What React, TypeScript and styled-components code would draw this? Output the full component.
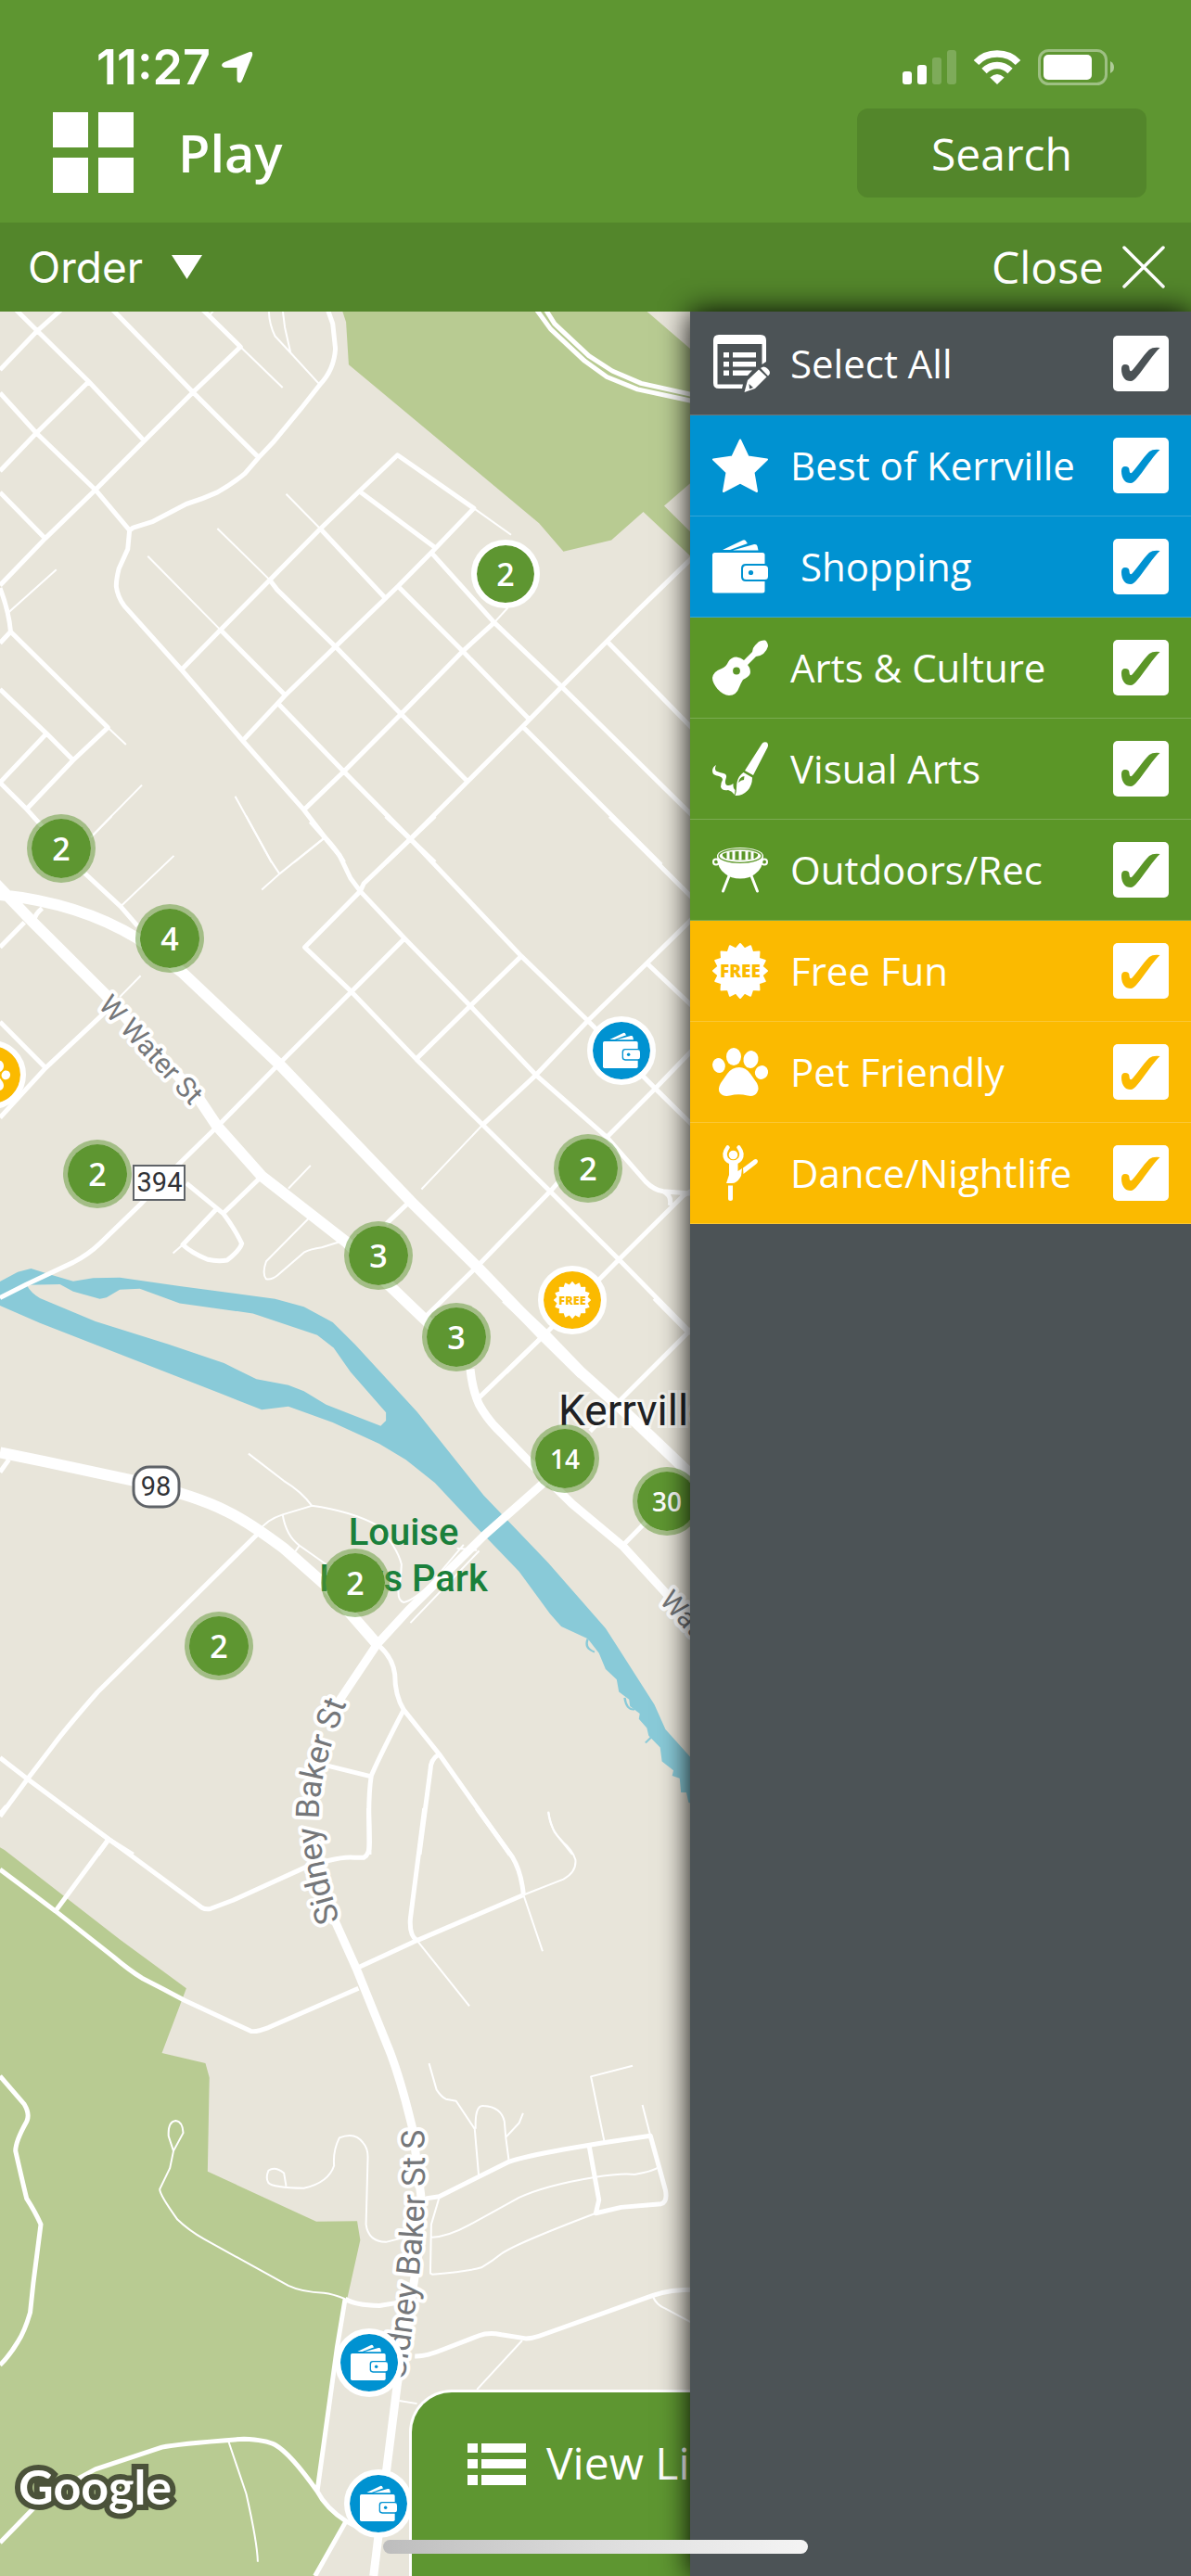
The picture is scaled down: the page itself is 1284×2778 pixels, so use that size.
import React, { useState } from 'react';
import styled, { createGlobalStyle } from 'styled-components';

const colors = {
  header: '#5e9631',
  bar: '#53862b',
  panel: '#4c5356',
  blue: '#0092d1',
  green: '#5b9627',
  yellow: '#fbba00',
  land: '#e8e5da',
  park: '#b8cb92',
  water: '#89cad8',
};

const GlobalStyle = createGlobalStyle`
  *, *::before, *::after { box-sizing: border-box; }
  body {
    margin: 0;
    background: ${colors.land};
    color: #fff;
    font-family: "Open Sans", "Noto Sans", sans-serif;
  }
  button, select, input { font: inherit; color: inherit; margin: 0; }
`;

const Screen = styled.div`
  display: flex;
  flex-direction: column;
  min-height: 100vh;
  position: relative;
  overflow: hidden;
`;

/* ---------- header ---------- */

const Header = styled.header`
  background: ${colors.header};
  height: 240px;
  padding-top: 40px;
`;

const StatusBar = styled.div`
  display: flex;
  justify-content: space-between;
  align-items: center;
  height: 66px;
  padding: 0 82px 0 104px;
`;

const Clock = styled.div`
  display: flex;
  align-items: center;
  gap: 12px;
  font-family: Inter, sans-serif;
  font-size: 52px;
  font-weight: 600;
  line-height: 60px;
`;

const StatusIcons = styled.div`
  display: flex;
  align-items: center;
  gap: 18px;
`;

const TitleRow = styled.div`
  display: flex;
  align-items: center;
  height: 118px;
  padding: 0 48px 0 56px;
`;

const IconButton = styled.button`
  display: flex;
  padding: 0 0 2px;
  border: 0;
  background: none;
`;

const Title = styled.h1`
  flex: 1;
  margin: 0 0 0 48px;
  padding-bottom: 2px;
  font-size: 56px;
  font-weight: 600;
  line-height: 72px;
`;

const SearchButton = styled.button`
  width: 312px;
  height: 96px;
  padding: 0;
  border: 0;
  border-radius: 12px;
  background: ${colors.bar};
  font-size: 48px;
`;

const Toolbar = styled.div`
  display: flex;
  align-items: center;
  justify-content: space-between;
  height: 96px;
  padding: 0 28px 0 30px;
  background: ${colors.bar};
  font-size: 48px;
`;

const OrderField = styled.label`
  display: flex;
  align-items: center;
  gap: 30px;
`;

const OrderSelect = styled.select`
  appearance: none;
  border: 0;
  padding: 0;
  background: none;
  font-family: Inter, sans-serif;
  font-size: 46px;
  line-height: 60px;
`;

const CloseButton = styled.button`
  display: flex;
  align-items: center;
  gap: 20px;
  padding: 0;
  border: 0;
  background: none;
  line-height: 60px;
`;

/* ---------- map ---------- */

const Main = styled.main`
  position: relative;
  flex: 1;
`;

const MapArea = styled.div`
  position: absolute;
  inset: 0;
  overflow: hidden;
  background: ${colors.land};
`;

const MapDrawing = styled.svg`
  display: block;
  width: 1284px;
  height: 2442px;

  .road, .lane, .avenue, .trunk {
    fill: none;
    stroke: #fff;
    stroke-linejoin: round;
    vector-effect: non-scaling-stroke;
  }
  .lane { stroke-width: 2px; }
  .road { stroke-width: 5px; }
  .avenue { stroke-width: 9px; }
  .trunk { stroke-width: 12px; }

  text { font-family: Roboto, Inter, sans-serif; }
  .street {
    fill: #75777a;
    stroke: #fff;
    stroke-width: 8px;
    stroke-linejoin: round;
    paint-order: stroke;
  }
`;

const Pin = styled.button<{ $x: number; $y: number; $fill: string; $solid?: boolean; $small?: boolean }>`
  position: absolute;
  left: ${(p) => p.$x - 37}px;
  top: ${(p) => p.$y - 37}px;
  display: flex;
  align-items: center;
  justify-content: center;
  width: 74px;
  height: 74px;
  padding: 0;
  border: ${(p) => (p.$solid ? 6 : 5)}px solid ${(p) => (p.$solid ? '#fff' : 'rgba(94, 150, 49, 0.5)')};
  border-radius: 50%;
  background: ${(p) => p.$fill};
  background-clip: padding-box;
  font-size: ${(p) => (p.$small ? 28 : 34)}px;
  font-weight: 600;
  line-height: 40px;
`;

const ListButton = styled.button`
  position: absolute;
  bottom: 0;
  left: 50%;
  transform: translateX(-50%);
  display: flex;
  align-items: flex-start;
  gap: 22px;
  width: 402px;
  height: 201px;
  padding: 44px 0 0 60px;
  border: 3px solid #fff;
  border-bottom: 0;
  border-radius: 46px 46px 0 0;
  background: ${colors.header};
  font-size: 48px;
  line-height: 64px;
  white-space: nowrap;

  svg { margin-top: 10px; }
`;

/* ---------- filter drawer ---------- */

const Drawer = styled.form`
  position: absolute;
  top: 0;
  right: 0;
  bottom: 0;
  width: 540px;
  background: ${colors.panel};
  box-shadow: 0 0 30px #000;
`;

const FilterRow = styled.label<{ $color: string; $tall?: boolean }>`
  display: flex;
  align-items: center;
  height: ${(p) => (p.$tall ? 112 : 109)}px;
  padding: 0 24px;
  border-bottom: 1px solid rgba(255, 255, 255, 0.2);
  background: ${(p) => p.$color};
  font-size: 42px;
  line-height: 58px;
`;

const FilterName = styled.span`
  flex: 1;
  margin-left: 24px;
  white-space: pre;
`;

const CheckWrap = styled.span`
  position: relative;
  display: block;
  width: 60px;
  height: 60px;

  svg {
    position: absolute;
    inset: 0;
    pointer-events: none;
  }
`;

const CheckInput = styled.input`
  appearance: none;
  display: block;
  width: 60px;
  height: 60px;
  border-radius: 5px;
  background: #fff;

  &:not(:checked) + svg { display: none; }
`;

const HomeIndicator = styled.div`
  position: absolute;
  left: 50%;
  bottom: 24px;
  width: 458px;
  height: 15px;
  transform: translateX(-50%);
  border-radius: 8px;
  background: linear-gradient(90deg, #bdbdbd, #dcdcdc 50%, #f4f4f4);
`;

/* ---------- icons ---------- */

type IconName = 'list' | 'star' | 'wallet' | 'guitar' | 'brush' | 'grill' | 'free' | 'paw' | 'dancer';

const burst = Array.from({ length: 32 }, (_, i) => {
  const r = i % 2 ? 24 : 29;
  const a = (i * Math.PI) / 16;
  return `${(30 + r * Math.sin(a)).toFixed(1)},${(30 - r * Math.cos(a)).toFixed(1)}`;
}).join(' ');

function drawIcon(name: IconName, cut: string) {
  switch (name) {
    case 'list':
      return (
        <g transform="translate(0 -1)">
          <path d="M32 58H7Q1 58 1 52V6Q1 0 7 0H52Q58 0 58 6V29L53.500 32V10H5.500V53.500H33z" />
          <path d="M12 19h6v5.500h-6zM22 19h25v5.500H22zM12 29h6v5.500h-6zM22 29h25v5.500H22zM12 38.500h6V44h-6zM22 38.500h21L38 44H22z" />
          <path d="M34.500 62L38 49L50 37.500L58.500 45.500L46 58z" />
          <path d="M52 36Q56 32.500 60 37Q64 41 60 44.500z" />
          <path d="M39.500 53l4.500 4-4 1.500z" fill={cut} />
        </g>
      );
    case 'star':
      return (
        <path
          d="M30 2.500L38.500 20.500L59 23.500L44.500 37.500L48 58L30 48.500L12 58L15.500 37.500L1 23.500L21.500 20.500z"
          stroke="#fff"
          strokeWidth="2"
          strokeLinejoin="round"
        />
      );
    case 'wallet':
      return (
        <g transform="translate(0 1)">
          <path d="M11 11L33 .5Q36 -.5 37 3L38 4L19 11z" />
          <path d="M22 11.500L45 5Q48 4.500 48.500 7L49.500 11.500z" />
          <rect x="0" y="14" width="56.500" height="43.500" rx="2.500" />
          <path d="M60 26H36Q31 26 31 31V40Q31 45 36 45H60z" fill={cut} />
          <rect x="33" y="28" width="27" height="15" rx="3.500" />
          <circle cx="41.500" cy="35.500" r="2.600" fill={cut} />
        </g>
      );
    case 'guitar':
      return (
        <>
          <path d="M50 2Q53 0 57 .5Q60 3 60 7Q59 11 55 15Q51 18 47 18L38 27Q42 32 40.500 37Q39 40 33 43Q30.500 47 29 51Q26 60 18 60Q12 60 5.500 53Q0 46 0 41Q1 34 10 31Q15 29 17 24Q20 18.500 26 18.500Q31 19 34 22L43 13Q43 9 46 6z" />
          <circle cx="26" cy="33.500" r="3.900" fill={cut} />
        </>
      );
    case 'brush':
      return (
        <g transform="translate(0 1)">
          <path d="M53.500 2Q55 -.5 58.500 .5Q61 2.500 59.500 6L44 36L35 31z" />
          <path d="M33.500 33L43 38.500Q43 47 38 52.500Q32 58.500 24.500 58Q26 54 26 50Q26 42 29 37.500Q31 34.500 33.500 33z" />
          <path d="M28 44Q29 38 34.500 37L34 41Q31 41 28 44z" fill={cut} />
          <path d="M4 25Q2 29 4 31.500Q8 33 12 34Q16.500 35 14.500 40Q13 44 15 46.500Q19 48 22.500 45Q22 50 24.500 52L24 57Q21 53 17 52Q10 53 9 48.500Q9 44 11 41Q11 38 7 37Q0 36 0 31.500Q0 27 4 25z" />
        </g>
      );
    case 'grill':
      return (
        <g transform="translate(0 5.500)">
          <path d="M18 31L11.500 47.500M42 31L48.500 47.500" stroke="#fff" strokeWidth="3" strokeLinecap="round" />
          <circle cx="4" cy="16" r="3" fill="none" stroke="#fff" strokeWidth="2" />
          <circle cx="56" cy="16" r="3" fill="none" stroke="#fff" strokeWidth="2" />
          <path d="M5 9Q5 23 14 29Q20 34 30 34Q40 34 46 29Q55 23 55 9z" />
          <ellipse cx="30" cy="9.500" rx="25" ry="9" />
          <ellipse cx="30" cy="9.500" rx="23" ry="7.300" fill="none" stroke={cut} strokeWidth="1.300" />
          <path d="M11 7.500Q16 4.500 30 4.500Q44 4.500 49 7.500Q50 11 44 12.500Q38 14 30 14Q22 14 16 12.500Q10 11 11 7.500z" fill={cut} />
          <path d="M17 5v8M23 4v10M30 4v10M37 4v10M43 5v8" stroke="#fff" strokeWidth="3" />
        </g>
      );
    case 'free':
      return (
        <>
          <polygon points={burst} stroke="#fff" strokeWidth="2" strokeLinejoin="round" />
          <text
            x="30"
            y="37"
            fill={cut}
            fontFamily="Open Sans, sans-serif"
            fontSize="19"
            fontWeight="800"
            textAnchor="middle"
          >
            FREE
          </text>
        </>
      );
    case 'paw':
      return (
        <g transform="translate(0 4)">
          <ellipse cx="7" cy="19" rx="6.800" ry="8" transform="rotate(-15 7 19)" />
          <ellipse cx="23" cy="9.500" rx="8" ry="9.500" />
          <ellipse cx="41.500" cy="12.500" rx="8" ry="9.500" transform="rotate(10 41.500 12.500)" />
          <ellipse cx="53" cy="26.500" rx="7" ry="7.500" transform="rotate(30 53 26.500)" />
          <path d="M29 21Q36 21 41 28L48 38Q51 44 48 48.500Q45 53 38 51.500Q28 49 19 51.500Q12 53 8.500 49Q5 45 9 38L16 28Q21 21 29 21z" />
        </g>
      );
    case 'dancer':
      return (
        <>
          <circle cx="22.500" cy="10.500" r="4.800" />
          <path d="M16.500 2.500Q11.500 9 15 15Q18 18.500 22.500 18.500Q27 18.500 30 15Q33.500 9 28.500 2.500" fill="none" stroke="#fff" strokeWidth="4.500" strokeLinecap="round" />
          <path d="M18 18H27.500V28L32 25L31 33Q27 41 21 41H15L18 32z" />
          <path d="M33 24.500L45 15.500Q48 14 49 17Q49 19 47 20.500L33.500 31z" />
          <path d="M19.500 43.500V57.500" stroke="#fff" strokeWidth="5" />
          <circle cx="19.500" cy="57.500" r="2.500" />
        </>
      );
  }
}

function Icon({ name, cut, size = 60 }: { name: IconName; cut: string; size?: number }) {
  return (
    <svg width={size} height={size} viewBox="0 0 60 60" fill="#fff" overflow="visible" aria-hidden="true">
      {drawIcon(name, cut)}
    </svg>
  );
}

/* ---------- data ---------- */

const filters: { name: string; icon: IconName; color: string }[] = [
  { name: 'Select All', icon: 'list', color: colors.panel },
  { name: 'Best of Kerrville', icon: 'star', color: colors.blue },
  { name: '\u00a0Shopping', icon: 'wallet', color: colors.blue },
  { name: 'Arts & Culture', icon: 'guitar', color: colors.green },
  { name: 'Visual Arts', icon: 'brush', color: colors.green },
  { name: 'Outdoors/Rec', icon: 'grill', color: colors.green },
  { name: 'Free Fun', icon: 'free', color: colors.yellow },
  { name: 'Pet Friendly', icon: 'paw', color: colors.yellow },
  { name: 'Dance/Nightlife', icon: 'dancer', color: colors.yellow },
];

const clusters = [
  { x: 545, y: 283, count: 2, solid: true },
  { x: 66, y: 579, count: 2 },
  { x: 183, y: 676, count: 4 },
  { x: 105, y: 930, count: 2 },
  { x: 634, y: 924, count: 2 },
  { x: 408, y: 1018, count: 3 },
  { x: 492, y: 1106, count: 3 },
  { x: 609, y: 1237, count: 14 },
  { x: 719, y: 1283, count: 30 },
  { x: 383, y: 1371, count: 2 },
  { x: 236, y: 1439, count: 2 },
];

const places: { x: number; y: number; icon: IconName; color: string; label: string }[] = [
  { x: -9, y: 823, icon: 'paw', color: colors.yellow, label: 'Pet Friendly' },
  { x: 670, y: 797, icon: 'wallet', color: colors.blue, label: 'Shopping' },
  { x: 617, y: 1066, icon: 'free', color: colors.yellow, label: 'Free Fun' },
  { x: 398, y: 2212, icon: 'wallet', color: colors.blue, label: 'Shopping' },
  { x: 408, y: 2364, icon: 'wallet', color: colors.blue, label: 'Shopping' },
];

type Tile = { transform: string; lanes: string; roads: string; avenues: string; trunks: string };

const tiles: Tile[] = [
  {
    transform: 'translate(0 -6) scale(.4783 .38265)',
    lanes:
      'M542 115L637 230M606 10Q606 50 620 85L655 132L718 218M637 10L642 60L655 132M243 1188L284 1236M18 865L127 743M1068 570L1152 645M645 530L722 628M490 627L608 772M333 705L497 913M1114 892L1145 850M210 1490L320 1350M530 1382L612 1568M733 1498L663 1568M470 30L482 12',
    roads:
      'M34 8L84 70L200 213L325 380M140 8L84 70L0 180M0 245L82 358L215 518L292 632M200 213L82 358L0 465M252 8L435 243L583 427M455 8L542 115L435 243L325 380L215 518L102 655L0 787M0 525L102 655M738 8L750 50L756 120Q753 180 722 220L678 290L615 385L583 427L552 472Q525 500 490 525Q455 545 420 558L345 607L300 625L292 632L288 685L268 740Q262 770 262 790Q265 820 280 845L409 1025L547 1225L685 1420L733 1498Q760 1535 775 1568M0 795Q20 860 24 918L243 1188L165 1280L60 1418M0 950L24 918M0 1080L105 1205L165 1280M105 1205L0 1343L60 1418L137 1525M409 1025L497 913L608 772L722 628L810 522L896 420L1068 570L972 695L897 790L756 960L643 1097L547 1225M810 522L980 680M722 628L866 820M972 695L1114 892L1266 1073L1568 1445M608 772L625 800L756 960L904 1150L1054 1340M497 913L643 1097M897 790L1043 973L1193 1165M1114 892L1043 973L904 1150L775 1312L685 1420M628 1122L775 1312L925 1502L980 1568M1568 700L1440 855L1368 945L1266 1073L1178 1185L1054 1340L925 1502L870 1568M1368 945L1568 1200M1178 1185L1490 1575M1208 8L1241 65L1318 155L1368 200L1437 235L1568 270M1229 8L1250 50L1327 140L1380 183L1445 218L1568 252',
    avenues: '',
    trunks: '',
  },
  {
    transform: 'translate(0 544) scale(.4783 .38265)',
    lanes:
      'M555 0L610 125L630 163M730 62L630 163L590 208M272 255L392 112M252 0L205 60M1088 870L950 1052M317 450L270 510M412 1208L390 1232M700 985L650 1050M695 1135L600 1255Q590 1290 600 1305Q612 1308 625 1295L685 1230Q700 1220 725 1216L765 1200',
    roads:
      'M700 15L735 65L765 110L790 175L812 212L912 345L1060 535L1208 730L1368 905L1455 1030Q1475 1055 1495 1058L1568 1065M190 160L272 255L310 310M870 0L925 65L1175 395L1325 577L1477 768L1568 880M980 0L925 65L820 190L812 212L687 370L792 495L938 685L1088 870L1240 1058L1395 1250L1568 1470M912 345L792 495L628 700L490 875L400 985L320 1090L225 1205Q200 1235 165 1258L60 1320L0 1358M1175 395L1060 535L938 685M1568 280L1458 415L1325 577L1208 730L1088 870M1458 415L1568 545M1568 650L1477 768L1368 905M1260 1030L1240 1058L1075 1270L960 1410M1568 1050L1540 1070L1395 1250L1225 1465L1140 1568M1495 1058Q1515 1070 1510 1098M925 1085L870 1150M1375 0L1568 240M95 260Q75 280 78 300M0 370L55 300M0 580L103 710M235 555L103 710L0 850M420 1035L503 1120Q530 1165 545 1205Q540 1225 512 1252Q490 1256 468 1250Q430 1230 412 1208L490 1105M503 1120L590 1015',
    avenues: '',
    trunks:
      'M0 222Q180 245 310 345L410 440L630 700L925 1085L1075 1270L1225 1465L1312 1572M-10 190L75 300L235 500L450 800L490 875L590 1015L780 1200L850 1290L950 1410L1028 1500',
  },
  {
    transform: 'translate(0 1064) scale(.4783 .38265)',
    lanes:
      'M560 438L640 515Q680 545 703 585L637 610Q600 625 585 655M703 585Q790 600 850 640Q895 700 905 750L903 790Q890 850 910 857Q930 855 985 790M637 610Q645 670 675 697L735 750M675 697L662 720M1045 695L980 790M1080 712L925 915M1030 705L1075 710M1236 1447Q1240 1480 1250 1505L1290 1568',
    roads:
      'M1080 280L1225 105M1475 0L1550 95M1568 75L1400 285L1330 375M1405 695L1460 625M20 455L0 490M580 665L220 1110Q150 1210 120 1260L62 1355L0 1460M0 1295L62 1355L245 1525L300 1568M245 1525L220 1568M850 975Q885 1010 890 1060Q890 1120 910 1160L990 1285L1150 1568M910 1160Q860 1280 837 1345Q830 1400 832 1490L832 1568M740 1318L837 1348M990 1285Q970 1300 970 1330L945 1568',
    avenues:
      'M1060 200Q1065 260 1080 300Q1100 345 1130 380L1200 470L1290 580L1405 700L1500 830L1568 910M1230 515L1090 670L920 880L850 975L735 1190',
    trunks:
      'M1140 0L1225 100L1310 210L1400 310L1568 510M0 435L100 460L305 515Q450 560 510 600Q560 630 640 705L735 810L850 975',
  },
  {
    transform: 'translate(0 1614) scale(.4783 .52807)',
    lanes:
      'M1180 177L1270 145Q1300 130 1297 105Q1290 85 1270 70Q1240 45 1236 8M1180 177L1223 292M940 270L1058 404M391 700L380 670Q378 640 396 638Q412 640 413 663L391 700L383 735L360 778Q360 790 400 840Q425 862 460 880L650 975Q680 988 730 990Q750 992 778 1002M515 1293L555 1400Q580 1500 581 1539M645 772L640 745Q620 730 605 740Q598 755 605 765Q615 775 685 776Q740 765 753 730Q750 700 765 673Q800 660 818 683Q830 695 829 715L825 850Q830 885 870 886L905 878M967 521L984 575Q995 590 1005 594L1028 598L1070 655L1079 750M1072 655Q1070 605 1090 608Q1130 610 1137 640L1140 672L1147 720M1140 672L1170 643L1179 623M1362 680L1332 548L1426 526M1448 606L1466 669M970 877Q1010 875 1060 850L1170 795Q1230 770 1337 754Q1400 745 1430 748Q1470 742 1485 733M990 795L972 850L970 950L975 952Q1060 945 1085 938Q1110 925 1130 910Q1160 890 1343 827M1472 998Q1480 1015 1500 1022L1568 1055M1177 1087L1075 1187M900 1210L940 1216',
    roads:
      'M150 0L245 63L455 203Q465 208 475 205L525 188L690 120L740 107Q780 98 800 101L820 101Q833 95 833 70L831 0M245 63L125 210M0 125L125 210L255 303Q290 330 320 347Q370 370 415 392L565 455Q575 458 605 448L808 368M0 12L15 -4M957 0L925 225Q922 260 940 270M803 327L940 270L1180 177M1075 0L1155 100Q1175 130 1180 177M0 547L55 605Q68 625 60 640Q35 680 35 700Q50 760 60 797Q80 825 92 850L75 970L68 1030Q55 1070 40 1090Q20 1120 0 1137M778 1002Q800 1015 855 1016L895 1010M778 1002L760 1100L715 1395M0 1500L75 1430L180 1367L215 1350L365 1305Q400 1298 550 1288Q600 1290 620 1300Q655 1318 715 1395Q735 1430 780 1456L830 1480M780 1456L710 1568M960 797L990 793L1147 722Q1180 712 1270 697L1360 683L1466 669L1500 780Q1505 805 1490 808L1400 815L1343 827L1350 800L1328 690M935 1119Q960 1120 1000 1105L1080 1077Q1100 1070 1130 1075L1185 1083Q1200 1083 1215 1078L1472 995Q1510 983 1568 983',
    avenues: 'M735 190L803 327L880 500Q905 560 930 655L950 800L945 900L895 1180L870 1360L842 1568',
    trunks: '',
  },
];

function TownMap() {
  return (
    <MapDrawing viewBox="0 0 1284 2442" aria-label="Map of Kerrville">
      <g transform={tiles[0].transform}>
        <path
          fill={colors.park}
          d="M768 0L780 45L786 165L1215 612L1270 692L1378 660L1450 580L1548 695L1620 780L1640 740L1497 563L1620 430L1620 190L1444 0z"
        />
      </g>
      <g transform={tiles[3].transform}>
        <path
          fill={colors.park}
          d="M0 80L10 85L270 268L420 368L365 500L463 521L472 550L468 742L713 844L805 843L812 882L783 1000L776 1010L715 1395Q735 1430 780 1456L710 1568L0 1568z"
        />
      </g>
      <g transform={tiles[1].transform} fillRule="evenodd">
        <path
          fill={colors.water}
          d="M0 1312L40 1285L70 1275L115 1293L165 1311L210 1302L270 1301L405 1325L620 1361L685 1383L750 1427L800 1489L940 1679L1090 1914L1235 2104L1365 2289L1475 2504L1500 2574L1568 2669L1568 2789L1552 2780L1547 2752L1535 2752L1532 2712L1515 2705L1518 2690L1492 2664L1488 2625L1462 2592L1458 2570L1440 2545L1442 2530L1420 2509L1418 2490L1395 2468L1390 2434L1365 2404L1350 2359L1325 2319L1265 2284L1240 2249L1170 2129L1085 2019L980 1879L915 1814L855 1769L750 1709L650 1664L590 1673L500 1629L90 1429L0 1380z
             M60 1322L135 1320L165 1340L225 1361L240 1357L270 1335L315 1332L405 1373L570 1402L715 1463L752 1499L790 1567L870 1681L870 1704L858 1719L735 1659L685 1621L650 1604L578 1587L505 1542L380 1489L215 1424L90 1359Q70 1345 60 1322z"
        />
        <path
          fill="none"
          stroke={colors.water}
          strokeWidth="5"
          d="M1325 2319Q1316 2345 1340 2356M1408 2485Q1412 2520 1430 2518M1455 2612L1468 2596"
        />
      </g>
      {tiles.map((t) => (
        <g key={t.transform} transform={t.transform}>
          <path className="lane" d={t.lanes} />
          <path className="road" d={t.roads} />
          <path className="avenue" d={t.avenues} />
          <path className="trunk" d={t.trunks} />
        </g>
      ))}

      <path id="baker" d="M366 1735C355 1700 346 1664 344 1634C342 1594 352 1554 378 1490" fill="none" />
      <path id="baker-south" d="M436 2230C446 2170 452 2120 455 2084C459 2044 459 1994 456 1930" fill="none" />
      <text className="street" fontSize="30" transform="translate(105 749) rotate(47)">W Water St</text>
      <text className="street" fontSize="30" transform="translate(710 1391) rotate(47)">Water St</text>
      <text className="street" fontSize="35">
        <textPath href="#baker">Sidney Baker St</textPath>
      </text>
      <text className="street" fontSize="35">
        <textPath href="#baker-south">Sidney Baker St S</textPath>
      </text>

      <rect x="144" y="921" width="55" height="37" fill="#fff" stroke="#5f6368" strokeWidth="2" />
      <text x="172" y="949" fontSize="29" fill="#303236" textAnchor="middle">394</text>
      <rect x="144" y="1246" width="49" height="43" rx="17" fill="#fff" stroke="#5f6368" strokeWidth="3" />
      <text x="168" y="1277" fontSize="29" fill="#303236" textAnchor="middle">98</text>

      <text x="602" y="1201" fontSize="46" fill="#202124" stroke="#fff" strokeWidth="6" strokeOpacity=".6" paintOrder="stroke">
        Kerrville
      </text>
      <g fontSize="40" fontWeight="500" fill="#1a803b" textAnchor="middle">
        <text x="435" y="1330">Louise</text>
        <text x="435" y="1380">Hays Park</text>
      </g>
      <text
        x="20"
        y="2365"
        fontSize="52"
        fontWeight="700"
        fill="#fff"
        stroke="#4b523a"
        strokeWidth="12"
        paintOrder="stroke"
        style={{ fontFamily: 'Lato, sans-serif' }}
      >
        Google
      </text>
    </MapDrawing>
  );
}

function StatusGlyphs() {
  return (
    <StatusIcons>
      <svg width="58" height="38" viewBox="0 0 58 38" fill="#fff" aria-hidden="true">
        <rect x="0" y="23" width="10" height="14" rx="3" />
        <rect x="16" y="16" width="10" height="21" rx="3" />
        <rect x="32" y="8" width="10" height="29" rx="3" opacity=".2" />
        <rect x="48" y="0" width="10" height="37" rx="3" opacity=".2" />
      </svg>
      <svg width="52" height="38" viewBox="0 0 52 38" fill="none" stroke="#fff" strokeWidth="7.500" aria-hidden="true">
        <path d="M3.500 13.500Q12 4 26 4Q40 4 48.500 13.500" />
        <path d="M12 22.500Q18 16.500 26 16.500Q34 16.500 40 22.500" />
        <path d="M26 37L18.300 29.500Q26 22.500 33.700 29.500z" fill="#fff" stroke="none" />
      </svg>
      <svg width="83" height="40" viewBox="0 0 83 40" fill="#fff" aria-hidden="true">
        <rect x="1.500" y="1.500" width="72" height="36" rx="10" fill="none" stroke="#fff" strokeWidth="3" opacity=".4" />
        <rect x="6" y="6" width="52" height="27" rx="5" />
        <path d="M78 13Q82 15 82 19.500Q82 24 78 26z" opacity=".5" />
      </svg>
    </StatusIcons>
  );
}

export default function App() {
  const [checked, setChecked] = useState<boolean[]>(filters.map(() => true));

  const toggle = (index: number) =>
    setChecked((prev) =>
      index === 0 ? prev.map(() => !prev[0]) : prev.map((value, i) => (i === index ? !value : value)),
    );

  return (
    <Screen>
      <GlobalStyle />
      <Header>
        <StatusBar>
          <Clock>
            11:27
            <svg width="34" height="36" viewBox="0 0 34 36" fill="#fff" aria-hidden="true">
              <path d="M30 1Q34 0 33 5L22 32Q20 36 17 33Q16.500 32 16.500 31V18H3Q-1 17 .5 14Q1 13 3 12z" />
            </svg>
          </Clock>
          <StatusGlyphs />
        </StatusBar>
        <TitleRow>
          <IconButton aria-label="Home">
            <svg width="88" height="87" viewBox="0 0 88 87" fill="#fff" aria-hidden="true">
              <path d="M1 0h38v38H1zM50 0h38v38H50zM1 49h38v38H1zM50 49h38v38H50z" />
            </svg>
          </IconButton>
          <Title>Play</Title>
          <SearchButton>Search</SearchButton>
        </TitleRow>
      </Header>
      <Toolbar>
        <OrderField>
          <OrderSelect aria-label="Order">
            <option>Order</option>
          </OrderSelect>
          <svg width="33" height="26" viewBox="0 0 33 26" fill="#fff" aria-hidden="true">
            <path d="M0 0h33L16.500 26z" />
          </svg>
        </OrderField>
        <CloseButton>
          Close
          <svg width="46" height="46" viewBox="0 0 46 46" stroke="#fff" strokeWidth="3.500" strokeLinecap="round" aria-hidden="true">
            <path d="M2 2L44 44M44 2L2 44" />
          </svg>
        </CloseButton>
      </Toolbar>
      <Main>
        <MapArea>
          <TownMap />
          {clusters.map((c) => (
            <Pin key={`${c.x}-${c.y}`} $x={c.x} $y={c.y} $fill={colors.header} $solid={c.solid} $small={c.count > 9}>
              {c.count}
            </Pin>
          ))}
          {places.map((p) => (
            <Pin key={`${p.x}-${p.y}`} $x={p.x} $y={p.y} $fill={p.color} $solid aria-label={p.label}>
              <Icon name={p.icon} cut={p.color} size={40} />
            </Pin>
          ))}
          <ListButton>
            <svg width="63" height="48" viewBox="0 0 63 48" fill="#fff" aria-hidden="true">
              <path d="M0 1h11v10H0zM15 1h48v10H15zM0 18h11v10H0zM15 18h48v10H15zM0 35h11v11H0zM15 35h48v11H15z" />
            </svg>
            View List
          </ListButton>
        </MapArea>
        <Drawer>
          {filters.map((f, i) => (
            <FilterRow key={f.name} $color={f.color} $tall={i === 0}>
              <Icon name={f.icon} cut={f.color} />
              <FilterName>{f.name}</FilterName>
              <CheckWrap>
                <CheckInput type="checkbox" checked={checked[i]} onChange={() => toggle(i)} />
                <svg width="60" height="60" viewBox="0 0 60 60" fill={f.color} aria-hidden="true">
                  <path d="M9 36Q9 31 13 31Q17.500 31 17.500 35Q18 40 20.500 37.500C25 33 32 22 39 15Q43 12 50.500 13C43 20 33 36 26 44Q22 49 19 49Q14 49 12 46Q9 42 9 36z" />
                </svg>
              </CheckWrap>
            </FilterRow>
          ))}
        </Drawer>
      </Main>
      <HomeIndicator />
    </Screen>
  );
}
